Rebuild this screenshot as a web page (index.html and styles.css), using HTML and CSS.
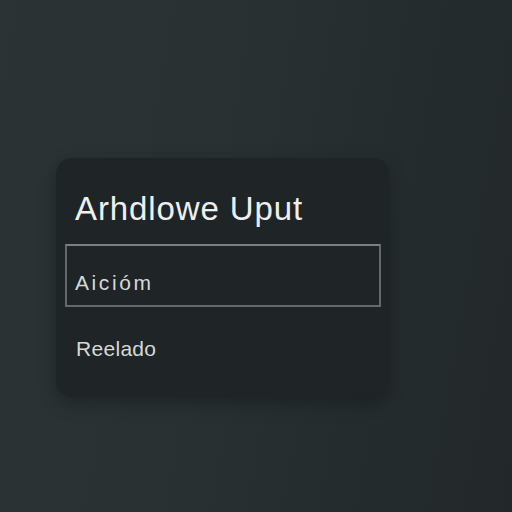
FILE: index.html
```html
<!DOCTYPE html>
<html lang="en">
<head>
  <meta charset="UTF-8" />
  <meta name="viewport" content="width=device-width, initial-scale=1.0" />
  <title>Arhdlowe Uput</title>
  <link rel="stylesheet" href="styles.css">
</head>
<body>
  <div class="card">
    <h1 class="title">Arhdlowe Uput</h1>
    <div class="field">Aicióm</div>
    <div class="option">Reelado</div>
  </div>
</body>
</html>
```

FILE: styles.css
```css
html, body {
  height: 100%;
}
body {
  margin: 0;
  padding: 158px 0 0 56px;
  box-sizing: border-box;
  font-family: "Liberation Sans", Arial, sans-serif;
  background: linear-gradient(100deg, #2b3334 0%, #283031 45%, #222829 100%);
  color: #e6e8e8;
}
.card {
  width: 333px;
  height: 239px;
  box-sizing: border-box;
  padding: 32px 8px 0 9px;
  background-color: #1f2427;
  border-radius: 16px;
  box-shadow: 0 6px 18px rgba(0,0,0,0.25);
}
.title {
  margin: 0 0 16px 10px;
  font-size: 33px;
  font-weight: normal;
  line-height: 38px;
  letter-spacing: 0.9px;
  color: #eef0f0;
}
.field {
  height: 63px;
  box-sizing: border-box;
  border: 2px solid #64696b;
  border-top-color: #7c8081;
  padding: 14px 8px 0;
  display: flex;
  align-items: center;
  font-size: 21px;
  letter-spacing: 2.6px;
  color: #d6d9d9;
}
.option {
  margin: 30px 0 0 11px;
  font-size: 21px;
  letter-spacing: 0.3px;
  color: #d6d9d9;
}
```
